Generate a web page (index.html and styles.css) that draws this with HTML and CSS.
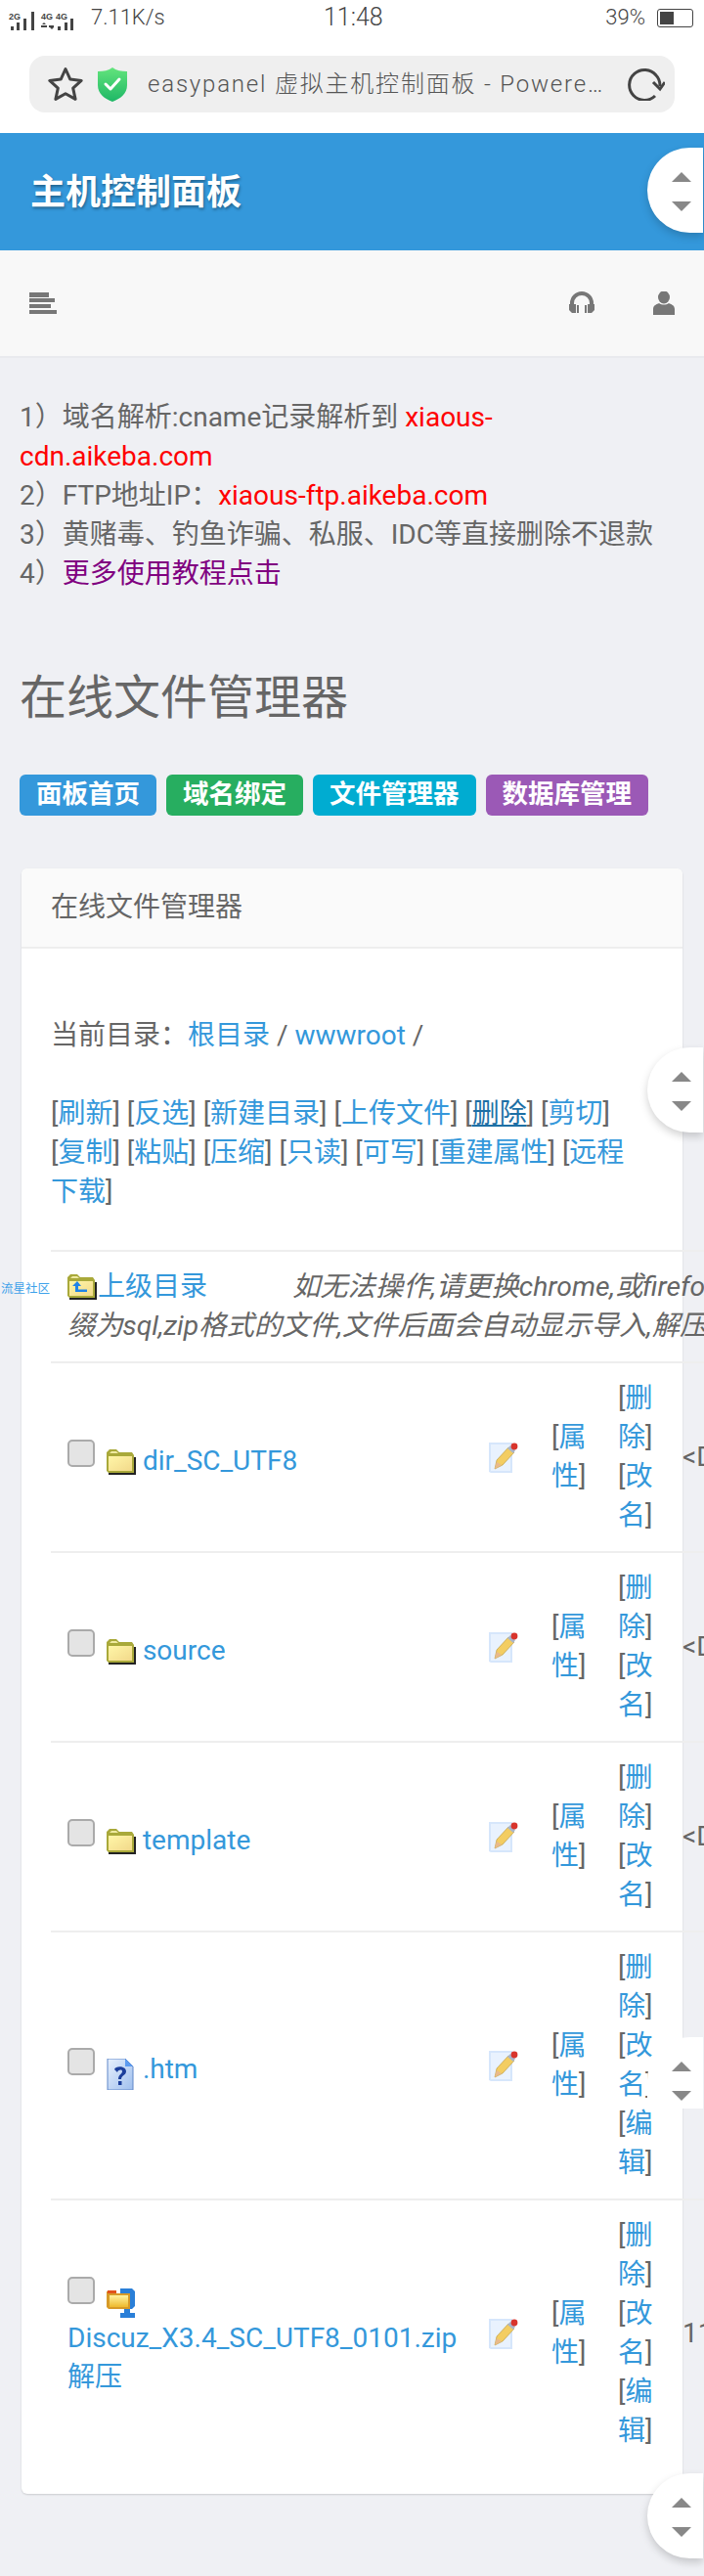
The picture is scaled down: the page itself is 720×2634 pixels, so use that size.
FILE: index.html
```html
<!DOCTYPE html>
<html lang="zh-CN">
<head>
  <meta charset="UTF-8">
  <meta name="viewport" content="width=device-width, initial-scale=1">
  <title>在线文件管理器</title>
  <link rel="stylesheet" href="styles.css">
</head>
<body>

<!-- file type icons -->
<svg class="defs" aria-hidden="true">
  <defs>
    <linearGradient id="gFolder" x1="0" y1="0" x2="1" y2="1">
      <stop offset="0" stop-color="#fff6a8"/>
      <stop offset="1" stop-color="#f2d98a"/>
    </linearGradient>
    <linearGradient id="gPage" x1="0" y1="0" x2="1" y2="1">
      <stop offset="0" stop-color="#e8f1fd"/>
      <stop offset="1" stop-color="#9fbfee"/>
    </linearGradient>
    <linearGradient id="gZip" x1="0" y1="0" x2="0" y2="1">
      <stop offset="0" stop-color="#fff3a0"/>
      <stop offset="1" stop-color="#eeb92c"/>
    </linearGradient>
    <linearGradient id="gShield" x1="0" y1="0" x2="0" y2="1">
      <stop offset="0" stop-color="#63e47c"/>
      <stop offset="1" stop-color="#1eb766"/>
    </linearGradient>
    <symbol id="folder" viewBox="0 0 30 27">
      <path d="M2 9h28v18H2z" fill="#222"/>
      <path d="M0 8V4l3-3h7l3 3h13l2 3v18H2l-2-2z" fill="#a9a93a"/>
      <path d="M2 8h24v15H2z" fill="url(#gFolder)"/>
      <path d="M3 5l2-2h5l2 2z" fill="#efe9a0"/>
    </symbol>
    <symbol id="folderUp" viewBox="0 0 30 27">
      <path d="M2 9h28v18H2z" fill="#222"/>
      <path d="M0 8V4l3-3h7l3 3h13l2 3v18H2l-2-2z" fill="#a9a93a"/>
      <path d="M2 8h24v15H2z" fill="url(#gFolder)"/>
      <path d="M3 5l2-2h5l2 2z" fill="#efe9a0"/>
      <path d="M10 8l-5 5h3v6h12v-2.500H11V13h3z" fill="#1f84e8"/>
    </symbol>
    <symbol id="question" viewBox="0 0 28 32">
      <path d="M1 0h18l8 8v24H1z" fill="url(#gPage)" stroke="#5f86c8"/>
      <path d="M19 0v8h8z" fill="#5c9bf0"/>
      <path d="M8 11c1-4 12-4 12 2 0 4-5 4-5 8h-3c0-5 4-5 4-8 0-2-4-2-5 1z" fill="#1c3f9c"/>
      <path d="M12 23h3.500v4H12z" fill="#1c3f9c"/>
    </symbol>
    <symbol id="zip" viewBox="0 0 30 32">
      <path d="M14 1h12l3 3v15l-3 3H14z" fill="#2a7fd8"/>
      <path d="M18 22h6v4h5v5H14v-5h4z" fill="#2a7fd8"/>
      <path d="M0 4h5l2 2h17v16H2l-2-2z" fill="#d79a28"/>
      <path d="M1 3h9v3H1z" fill="#e2531c"/>
      <path d="M3 8h19v12H3z" fill="url(#gZip)"/>
    </symbol>
    <symbol id="pencil" viewBox="0 0 30 32">
      <path d="M0 1h24v31H2l-2-1z" fill="#d6e6fb"/>
      <path d="M2 3h20v27H2z" fill="#e9f2fe"/>
      <path d="M6 28l2-9L20 6l6 5L14 24z" fill="#f3cd62" stroke="#b99334" stroke-width=".6"/>
      <path d="M6 28l2-7 5 3z" fill="#e9b98c"/>
      <path d="M19 7l3-3 5 5-2 3z" fill="#a9b5c9"/>
      <circle cx="26" cy="5" r="3.400" fill="#d8342c"/>
    </symbol>
  </defs>
</svg>

<!-- phone status bar -->
<div class="status-bar">
  <div class="status-left">
    <svg class="signal" width="80" height="28" viewBox="0 0 80 28">
      <text x="9" y="16" class="signal-text">2G</text>
      <path d="M11 23h3v4h-3zM17 19h3v8h-3zM24 15h3v12h-3zM32 8h3v19h-3z" fill="#444"/>
      <text x="42" y="16" class="signal-text">4G</text>
      <text x="57" y="16" class="signal-text">4G</text>
      <path d="M42 22h6v2h-6zM44 20l1-1 2 2h-4zM50 22h5v2h-5zM52 25l1 1 2-2h-4z" fill="#444"/>
      <path d="M59 23h3v4h-3zM66 19h3v8h-3zM72 15h3v12h-3z" fill="#444"/>
    </svg>
    <span class="speed">7.11K/s</span>
  </div>
  <span class="clock">11:48</span>
  <div class="status-right">
    <span class="percent">39%</span>
    <span class="battery"><span class="battery-level"></span></span>
  </div>
</div>

<!-- browser address bar -->
<div class="browser-bar">
  <div class="address">
    <svg class="star" width="36" height="36" viewBox="0 0 36 36">
      <path d="M18 2.500l4.800 10.600 11.400 1.300-8.500 7.700 2.400 11.300L18 27.700 7.900 33.400l2.400-11.300-8.500-7.700 11.400-1.300z" fill="none" stroke="#444" stroke-width="3" stroke-linejoin="round"/>
    </svg>
    <svg class="shield" width="32" height="35" viewBox="0 0 32 35">
      <path d="M16 0c4 3 9 4 15 4v14c0 9-7 14-15 17C8 32 1 27 1 18V4c6 0 11-1 15-4z" fill="url(#gShield)"/>
      <path d="M9 17l5 5 9-10" fill="none" stroke="#fff" stroke-width="3" stroke-linecap="round" stroke-linejoin="round"/>
    </svg>
    <span class="page-title">easypanel 虚拟主机控制面板 - Powere…</span>
    <svg class="reload" width="38" height="34" viewBox="0 0 38 34">
      <path d="M28 29A15.500 15.500 0 1 1 29 8c3 3 4 6 4 11" fill="none" stroke="#444" stroke-width="3"/>
      <path d="M26 15l7 7 5-7" fill="none" stroke="#444" stroke-width="3"/>
    </svg>
  </div>
</div>

<header class="brand">主机控制面板</header>

<nav class="navbar">
  <svg class="bars" width="28" height="22" viewBox="0 0 28 22">
    <path d="M0 0h20v5H0zM0 6h26v4H0zM0 12h22v4H0zM0 18h28v4H0z" fill="#777"/>
  </svg>
  <div class="nav-right">
    <svg width="26" height="24" viewBox="0 0 26 24">
      <path d="M3 20v-8a10 10 0 0 1 20 0v8" fill="none" stroke="#777" stroke-width="4"/>
      <path d="M0 13h4l3 0v9H3l-3-3zM26 13h-7v9h4l3-3z" fill="#777"/>
      <path d="M8 14h2v8H8zM16 14h2v8h-2z" fill="#777"/>
    </svg>
    <svg width="22" height="24" viewBox="0 0 22 24">
      <ellipse cx="11" cy="6" rx="6" ry="6.500" fill="#777"/>
      <path d="M0 24v-6c0-4 4-5 6-6 3 2 7 2 10 0 2 1 6 2 6 6v6z" fill="#777"/>
    </svg>
  </div>
</nav>

<main class="content">
  <div class="notice">
    1）域名解析:cname记录解析到 <span class="red">xiaous-cdn.aikeba.com</span><br>
    2）FTP地址IP：<span class="red">xiaous-ftp.aikeba.com</span><br>
    3）黄赌毒、钓鱼诈骗、私服、IDC等直接删除不退款<br>
    4）<a class="purple" href="#">更多使用教程点击</a>
  </div>

  <h1 class="page-head">在线文件管理器</h1>

  <div class="tabs">
    <a class="tab tab-blue" href="#">面板首页</a>
    <a class="tab tab-green" href="#">域名绑定</a>
    <a class="tab tab-teal" href="#">文件管理器</a>
    <a class="tab tab-purple" href="#">数据库管理</a>
  </div>

  <section class="card">
    <div class="card-head">在线文件管理器</div>
    <div class="card-body">
      <p class="crumbs">当前目录：<a href="#">根目录</a> / <a href="#">wwwroot</a> /</p>
      <p class="actions">
        [<a href="#">刷新</a>] [<a href="#">反选</a>] [<a href="#">新建目录</a>] [<a href="#">上传文件</a>] [<a class="active" href="#">删除</a>] [<a href="#">剪切</a>] [<a href="#">复制</a>] [<a href="#">粘贴</a>] [<a href="#">压缩</a>] [<a href="#">只读</a>] [<a href="#">可写</a>] [<a href="#">重建属性</a>] [<a href="#">远程下载</a>]
      </p>

      <table class="files">
        <colgroup>
          <col class="col-name">
          <col class="col-edit">
          <col class="col-prop">
          <col class="col-ops">
          <col class="col-size">
        </colgroup>
        <tr>
          <td class="parent" colspan="5">
            <svg class="icon-up"><use href="#folderUp"/></svg><a href="#">上级目录</a><em class="tip">如无法操作,请更换chrome,或firefox浏览器,后<br>缀为sql,zip格式的文件,文件后面会自动显示导入,解压功能</em>
          </td>
        </tr>
        <tr>
          <td class="name"><input class="chk" type="checkbox"> <svg class="icon-file"><use href="#folder"/></svg> <a href="#">dir_SC_UTF8</a></td>
          <td><svg class="icon-edit"><use href="#pencil"/></svg></td>
          <td>[<a href="#">属性</a>]</td>
          <td>[<a href="#">删除</a>] [<a href="#">改名</a>]</td>
          <td class="size">&lt;DIR&gt;</td>
        </tr>
        <tr>
          <td class="name"><input class="chk" type="checkbox"> <svg class="icon-file"><use href="#folder"/></svg> <a href="#">source</a></td>
          <td><svg class="icon-edit"><use href="#pencil"/></svg></td>
          <td>[<a href="#">属性</a>]</td>
          <td>[<a href="#">删除</a>] [<a href="#">改名</a>]</td>
          <td class="size">&lt;DIR&gt;</td>
        </tr>
        <tr>
          <td class="name"><input class="chk" type="checkbox"> <svg class="icon-file"><use href="#folder"/></svg> <a href="#">template</a></td>
          <td><svg class="icon-edit"><use href="#pencil"/></svg></td>
          <td>[<a href="#">属性</a>]</td>
          <td>[<a href="#">删除</a>] [<a href="#">改名</a>]</td>
          <td class="size">&lt;DIR&gt;</td>
        </tr>
        <tr>
          <td class="name"><input class="chk" type="checkbox"> <svg class="icon-file icon-doc"><use href="#question"/></svg> <a href="#">.htm</a></td>
          <td><svg class="icon-edit"><use href="#pencil"/></svg></td>
          <td>[<a href="#">属性</a>]</td>
          <td>[<a href="#">删除</a>] [<a href="#">改名</a>] [<a href="#">编辑</a>]</td>
          <td class="size"></td>
        </tr>
        <tr>
          <td class="name"><input class="chk" type="checkbox"> <svg class="icon-file icon-zip"><use href="#zip"/></svg> <a href="#">Discuz_X3.4_SC_UTF8_0101.zip</a> <a href="#">解压</a></td>
          <td><svg class="icon-edit"><use href="#pencil"/></svg></td>
          <td>[<a href="#">属性</a>]</td>
          <td>[<a href="#">删除</a>] [<a href="#">改名</a>] [<a href="#">编辑</a>]</td>
          <td class="size">11.7 MB</td>
        </tr>
      </table>
    </div>
  </section>
</main>

<!-- floating things over the page -->
<a class="watermark" href="#">流星社区</a>

<div class="scroller scroller-1"><i class="up"></i><i class="down"></i></div>
<div class="scroller scroller-2"><i class="up"></i><i class="down"></i></div>
<div class="scroller scroller-3"><i class="up"></i><i class="down"></i></div>
<div class="scroller scroller-4"><i class="up"></i><i class="down"></i></div>

</body>
</html>
```

FILE: styles.css
```css
* { margin: 0; padding: 0; box-sizing: border-box; }
html, body {
  width: 720px;
  height: 2634px;
  overflow: hidden;
}
body {
  position: relative;
  font-family: Roboto, "Noto Sans CJK SC", sans-serif;
  font-size: 28px;
  line-height: 40px;
  color: #666;
  background: #eff0f4;
}
a {
  color: #3498db;
  text-decoration: none;
}
.defs {
  position: absolute;
  width: 0;
  height: 0;
}

/* status bar */
.status-bar {
  height: 36px;
  background: #fff;
  display: flex;
  justify-content: space-between;
  align-items: center;
  position: relative;
  color: #444;
  font-weight: 300;
}
.status-left {
  display: flex;
  align-items: center;
}
.signal-text {
  font-family: "Liberation Sans", sans-serif;
  font-size: 9px;
  font-weight: bold;
  fill: #444;
}
.speed {
  margin-left: 13px;
  font-size: 22px;
}
.clock {
  font-size: 25px;
  position: absolute;
  left: 331px;
}
.status-right {
  display: flex;
  align-items: center;
  margin-right: 11px;
}
.percent {
  font-size: 22px;
  margin-right: 12px;
}
.battery {
  width: 37px;
  height: 19px;
  border: 1.500px solid #444;
  border-radius: 3px;
  padding: 2px;
  display: block;
}
.battery-level {
  display: block;
  width: 14px;
  height: 100%;
  background: #444;
}

/* browser bar */
.browser-bar {
  height: 100px;
  background: #fff;
  padding: 21px 30px 0;
}
.address {
  height: 58px;
  background: #efefef;
  border-radius: 16px;
  display: flex;
  align-items: center;
  padding-left: 19px;
}
.shield {
  margin-left: 14px;
}
.page-title {
  margin-left: 20px;
  width: 491px;
  font-size: 24px;
  font-weight: 300;
  letter-spacing: 1.800px;
  white-space: nowrap;
  color: #555;
}

/* panel header */
.brand {
  height: 120px;
  background: #3498db;
  color: #fff;
  font-size: 36px;
  font-weight: bold;
  line-height: 122px;
  padding-left: 31px;
  text-shadow: 1px 2px 3px rgba(0, 0, 0, 0.35);
}
.navbar {
  height: 110px;
  background: #f8f8f8;
  border-bottom: 2px solid #e9eaee;
  display: flex;
  justify-content: space-between;
  align-items: center;
  padding: 0 30px;
}
.nav-right {
  display: flex;
  gap: 60px;
  align-items: center;
}

/* page content */
.content {
  padding: 41px 22px 0 20px;
}
.red { color: #f00; }
.purple { color: #800080; }
.page-head {
  font-size: 48px;
  font-weight: 400;
  line-height: 60px;
  margin-top: 77px;
  color: #666;
}
.tabs {
  display: flex;
  gap: 10px;
  margin-top: 48px;
}
.tab {
  height: 42px;
  line-height: 40px;
  padding: 0 17px;
  border-radius: 6px;
  color: #fff;
  font-size: 26.500px;
  font-weight: bold;
  white-space: nowrap;
}
.tab-blue { background: #3498db; }
.tab-green { background: #27ae60; }
.tab-teal { background: #00acd1; }
.tab-purple { background: #9b59b6; }

/* card */
.card {
  width: 676px;
  margin: 54px 0 0 2px;
  background: #fff;
  border-radius: 6px;
  box-shadow: 0 1px 2px rgba(0, 0, 0, 0.15);
}
.card-head {
  height: 82px;
  line-height: 80px;
  padding-left: 30px;
  background: #fafafa;
  border-bottom: 2px solid #eee;
  border-radius: 6px 6px 0 0;
}
.card-body {
  padding: 69px 30px 28px;
}
.crumbs {
  margin-bottom: 40px;
}
.actions {
  margin-bottom: 39px;
  width: 612px;
}
.actions .active {
  color: #1d6fa5;
  text-decoration: underline;
}

/* file table */
.files {
  border-collapse: collapse;
  table-layout: fixed;
  width: 751px;
}
.col-name { width: 431px; }
.col-edit { width: 64px; }
.col-prop { width: 68px; }
.col-ops { width: 68px; }
.col-size { width: 120px; }
.files td {
  border-top: 2px solid #eee;
  padding: 16px 15px 16px 17px;
  vertical-align: middle;
}
.files .name {
  padding-right: 12px;
}
.files .size {
  padding-left: 15px;
  padding-right: 0;
  white-space: nowrap;
}
.files .parent {
  white-space: nowrap;
  padding-right: 0;
}
.tip {
  margin-left: 87px;
  font-size: 28.300px;
}
.icon-up {
  width: 30px;
  height: 27px;
  margin-right: 1px;
  vertical-align: -4px;
}
.chk {
  appearance: none;
  width: 28px;
  height: 28px;
  margin: 6px 5px 0 0;
  border: 2px solid #aaa;
  border-radius: 5px;
  background: #e4e4e4;
  vertical-align: 3px;
}
.icon-file {
  width: 30px;
  height: 27px;
  vertical-align: -5px;
}
.icon-doc {
  width: 28px;
  height: 32px;
  margin-right: 2px;
  vertical-align: -12px;
}
.icon-zip {
  width: 30px;
  height: 32px;
  vertical-align: -12px;
}
.icon-edit {
  display: block;
  width: 30px;
  height: 32px;
}

/* overlays */
.watermark {
  position: absolute;
  left: 1px;
  top: 1308px;
  font-size: 12.500px;
  line-height: 20px;
  color: #3ea2ea;
  white-space: nowrap;
}
.scroller {
  position: absolute;
  left: 662px;
  width: 57px;
  height: 87px;
  background: #fff;
  border-radius: 44px 0 0 44px;
  box-shadow: 0 4px 8px rgba(0, 0, 0, 0.18);
}
.scroller-1 { top: 151px; }
.scroller-2 { top: 1071px; }
.scroller-3 { top: 2083px; height: 73px; border-radius: 44px 0 0 0; box-shadow: none; }
.scroller-4 { top: 2529px; }
.scroller i {
  position: absolute;
  left: 25px;
  width: 0;
  height: 0;
  border-left: 10px solid transparent;
  border-right: 10px solid transparent;
}
.scroller .up {
  top: 25px;
  border-bottom: 10px solid #888;
}
.scroller .down {
  top: 55px;
  border-top: 10px solid #888;
}
```
